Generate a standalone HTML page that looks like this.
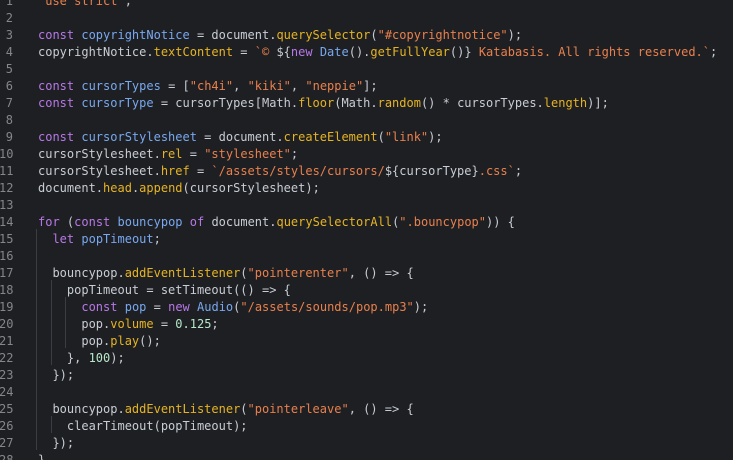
<!DOCTYPE html>
<html><head><meta charset="utf-8"><style>
html,body{margin:0;padding:0;background:#1e1f22;width:733px;height:460px;overflow:hidden}
.wrap{position:relative;width:733px;height:460px;overflow:hidden}
pre{position:absolute;left:0;top:-7.5px;margin:0;font-family:"DejaVu Sans Mono","Liberation Mono",monospace;font-size:12px;line-height:17px;color:#c8ccd4}
.ln{display:inline-block;width:14px;text-align:right;color:#85868a;margin-right:25px;margin-left:-1px}
.k{color:#b878e8}.v{color:#78a8f0}.f{color:#e6b422}.s{color:#e8804e}.n{color:#b5e8c8}
.g{position:absolute;width:1px;background:#3c3d42}
</style></head><body><div class="wrap">
<div class="g" style="left:36px;top:229px;height:221px"></div>
<div class="g" style="left:51px;top:280px;height:85px"></div>
<div class="g" style="left:65px;top:297px;height:51px"></div>
<div class="g" style="left:51px;top:416px;height:17px"></div>
<pre><span class="ln">1</span><span class="s">"use strict"</span>;
<span class="ln">2</span>
<span class="ln">3</span><span class="k">const</span> <span class="v">copyrightNotice</span> = document.<span class="f">querySelector</span>(<span class="s">"#copyrightnotice"</span>);
<span class="ln">4</span>copyrightNotice.<span class="f">textContent</span> = <span class="s">`© </span>${<span class="k">new</span> <span class="v">Date</span>().<span class="f">getFullYear</span>()}<span class="s"> Katabasis. All rights reserved.`</span>;
<span class="ln">5</span>
<span class="ln">6</span><span class="k">const</span> <span class="v">cursorTypes</span> = [<span class="s">"ch4i"</span>, <span class="s">"kiki"</span>, <span class="s">"neppie"</span>];
<span class="ln">7</span><span class="k">const</span> <span class="v">cursorType</span> = cursorTypes[Math.<span class="f">floor</span>(Math.<span class="f">random</span>() * cursorTypes.<span class="f">length</span>)];
<span class="ln">8</span>
<span class="ln">9</span><span class="k">const</span> <span class="v">cursorStylesheet</span> = document.<span class="f">createElement</span>(<span class="s">"link"</span>);
<span class="ln">10</span>cursorStylesheet.<span class="f">rel</span> = <span class="s">"stylesheet"</span>;
<span class="ln">11</span>cursorStylesheet.<span class="f">href</span> = <span class="s">`/assets/styles/cursors/</span>${cursorType}<span class="s">.css`</span>;
<span class="ln">12</span>document.<span class="f">head</span>.<span class="f">append</span>(cursorStylesheet);
<span class="ln">13</span>
<span class="ln">14</span><span class="k">for</span> (<span class="k">const</span> <span class="v">bouncypop</span> <span class="k">of</span> document.<span class="f">querySelectorAll</span>(<span class="s">".bouncypop"</span>)) {
<span class="ln">15</span>  <span class="k">let</span> <span class="v">popTimeout</span>;
<span class="ln">16</span>
<span class="ln">17</span>  bouncypop.<span class="f">addEventListener</span>(<span class="s">"pointerenter"</span>, () =&gt; {
<span class="ln">18</span>    popTimeout = setTimeout(() =&gt; {
<span class="ln">19</span>      <span class="k">const</span> <span class="v">pop</span> = <span class="k">new</span> <span class="v">Audio</span>(<span class="s">"/assets/sounds/pop.mp3"</span>);
<span class="ln">20</span>      pop.<span class="f">volume</span> = <span class="n">0.125</span>;
<span class="ln">21</span>      pop.<span class="f">play</span>();
<span class="ln">22</span>    }, <span class="n">100</span>);
<span class="ln">23</span>  });
<span class="ln">24</span>
<span class="ln">25</span>  bouncypop.<span class="f">addEventListener</span>(<span class="s">"pointerleave"</span>, () =&gt; {
<span class="ln">26</span>    clearTimeout(popTimeout);
<span class="ln">27</span>  });
<span class="ln">28</span>}
</pre></div></body></html>
